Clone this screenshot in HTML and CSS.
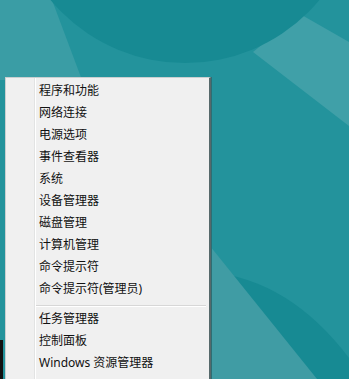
FILE: index.html
```html
<!DOCTYPE html>
<html lang="zh-CN">
<head>
    <meta charset="UTF-8">
    <meta name="viewport" content="width=device-width, initial-scale=1.0">
    <title>Win+X 菜单</title>
    <link rel="stylesheet" href="styles.css">
</head>
<body>
    <div class="desktop">
        <svg class="wallpaper" width="349" height="379" viewBox="0 0 349 379">
            <rect width="349" height="379" fill="#23939c"/>
            <path d="M0 0 L52 0 L82 80 L0 80 Z" fill="#3a9da5"/>
            <path d="M253 52 L300 14 L349 42 L349 126 Z" fill="#40a0a8"/>
            <circle cx="185" cy="-112" r="175" fill="#178a93"/>
            <path d="M210 272 Q290 280 349 358 L349 379 L300 379 Z" fill="#178a93"/>
            <path d="M210 246 L317 379 L210 379 Z" fill="#409ca4"/>
            <rect x="0" y="340" width="3" height="39" fill="#111"/>
        </svg>

        <div class="menu">
            <ul class="group">
                <li>程序和功能</li>
                <li>网络连接</li>
                <li>电源选项</li>
                <li>事件查看器</li>
                <li>系统</li>
                <li>设备管理器</li>
                <li>磁盘管理</li>
                <li>计算机管理</li>
                <li>命令提示符</li>
                <li>命令提示符(管理员)</li>
            </ul>
            <div class="separator"></div>
            <ul class="group">
                <li>任务管理器</li>
                <li>控制面板</li>
                <li>Windows 资源管理器</li>
            </ul>
        </div>
    </div>
</body>
</html>
```
FILE: styles.css
```css
body {
    margin: 0;
    font-family: "Noto Sans", "Noto Sans CJK SC", sans-serif;
    overflow: hidden;
}
.desktop {
    position: relative;
    width: 349px;
    height: 379px;
    overflow: hidden;
    background-color: #23939c;
}
.wallpaper {
    display: block;
}
.menu {
    position: absolute;
    left: 5px;
    top: 77px;
    width: 203px;
    height: 320px;
    padding-top: 2px;
    background-color: #f0f0f0;
    border: 1px solid #c9cfd0;
    border-right: 2px solid #56696b;
    box-shadow: 1px 0 0 #2d6e74;
}
.menu::before {
    content: "";
    position: absolute;
    left: 28px;
    top: 0;
    bottom: 0;
    width: 1px;
    background-color: #e2e3e3;
    box-shadow: 1px 0 0 #ffffff;
}
.group {
    list-style: none;
    margin: 0;
    padding: 0;
}
.group li {
    height: 22px;
    line-height: 22px;
    padding-left: 33px;
    font-size: 12px;
    color: #111;
    white-space: nowrap;
}
.separator {
    height: 1px;
    margin: 5px 3px 1px 29px;
    background-color: #d7d7d7;
    border-bottom: 1px solid #ffffff;
}
```
